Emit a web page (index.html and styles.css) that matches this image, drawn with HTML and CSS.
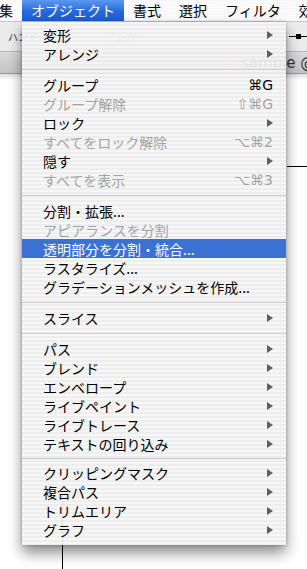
FILE: index.html
```html
<html>
  <head>
    <title>オブジェクト menu</title>
    <meta charset="utf-8">
    <link rel="stylesheet" href="styles.css">
  </head>
  <body>
    <div class="screen">
      <div class="menubar">
        <span class="title first">集</span>
        <span class="title open">オブジェクト</span>
        <span class="title">書式</span>
        <span class="title">選択</span>
        <span class="title">フィルタ</span>
        <span class="title">効果</span>
      </div>

      <div class="toolbar">
        <span class="tool-label">ハンドル</span>
        <span class="tool-label anchor">アンカー</span>
        <span class="slider"><span class="knob"></span></span>
      </div>

      <div class="tabbar">
        <span class="doc-icon"></span>
        <span class="doc-name">sample @ 100%</span>
      </div>

      <div class="canvas">
        <div class="guide-v"></div>
        <div class="guide-h"></div>
      </div>

      <div class="menu">
        <div class="item">変形<span class="arrow"></span></div>
        <div class="item">アレンジ<span class="arrow"></span></div>
        <div class="sep"></div>
        <div class="item">グループ<span class="key">⌘G</span></div>
        <div class="item off">グループ解除<span class="key">⇧⌘G</span></div>
        <div class="item">ロック<span class="arrow"></span></div>
        <div class="item off">すべてをロック解除<span class="key">⌥⌘2</span></div>
        <div class="item">隠す<span class="arrow"></span></div>
        <div class="item off">すべてを表示<span class="key">⌥⌘3</span></div>
        <div class="sep"></div>
        <div class="item">分割・拡張...</div>
        <div class="item off">アピアランスを分割</div>
        <div class="item hot">透明部分を分割・統合...</div>
        <div class="item">ラスタライズ...</div>
        <div class="item">グラデーションメッシュを作成...</div>
        <div class="sep"></div>
        <div class="item">スライス<span class="arrow"></span></div>
        <div class="sep"></div>
        <div class="item">パス<span class="arrow"></span></div>
        <div class="item">ブレンド<span class="arrow"></span></div>
        <div class="item">エンベロープ<span class="arrow"></span></div>
        <div class="item">ライブペイント<span class="arrow"></span></div>
        <div class="item">ライブトレース<span class="arrow"></span></div>
        <div class="item">テキストの回り込み<span class="arrow"></span></div>
        <div class="sep short"></div>
        <div class="item">クリッピングマスク<span class="arrow"></span></div>
        <div class="item">複合パス<span class="arrow"></span></div>
        <div class="item">トリムエリア<span class="arrow"></span></div>
        <div class="item">グラフ<span class="arrow"></span></div>
      </div>
    </div>
  </body>
</html>
```

FILE: styles.css
```css
body {
  margin: 0;
  font-family: "Noto Sans CJK JP", "DejaVu Sans", sans-serif;
}

.screen {
  position: relative;
  width: 307px;
  height: 569px;
  overflow: hidden;
  background: #fff;
  display: flex;
  flex-direction: column;
}

/* top menu bar */
.menubar {
  height: 22px;
  display: flex;
  white-space: nowrap;
  background: repeating-linear-gradient(#f7f7f7 0 1px, #fdfdfd 1px 2px);
  border-bottom: 1px solid #c8c8c8;
  box-sizing: border-box;
}

.title {
  padding: 0 9px;
  font-size: 14px;
  line-height: 21px;
  color: #000;
}

.title.first {
  margin-left: -10px;
}

.title.open {
  color: #fff;
  background: linear-gradient(#5d98f0, #2468dc 55%, #1b5ed4);
}

/* tool options bar */
.toolbar {
  height: 30px;
  display: flex;
  align-items: center;
  background: #ececec;
  border-bottom: 1px solid #b8b8b8;
  box-sizing: border-box;
}

.tool-label {
  font-size: 10px;
  color: #333;
  margin-left: 8px;
}

.tool-label.anchor {
  margin-left: 58px;
  color: #888;
}

.slider {
  margin-left: auto;
  width: 18px;
  height: 1px;
  background: #000;
  display: flex;
  align-items: center;
  justify-content: center;
}

.knob {
  width: 5px;
  height: 5px;
  background: #000;
}

/* document tab */
.tabbar {
  height: 22px;
  display: flex;
  align-items: center;
  justify-content: flex-end;
  white-space: nowrap;
  background: linear-gradient(#dadada, #c4c4c4);
  border-bottom: 1px solid #9a9a9a;
  box-sizing: border-box;
}

.doc-icon {
  width: 10px;
  height: 12px;
  background: #f2b36a;
  margin-right: 6px;
  flex-shrink: 0;
}

.doc-name {
  font-family: "DejaVu Sans", sans-serif;
  font-size: 15px;
  color: #333;
  margin-right: -56px;
}

.canvas {
  position: relative;
  flex: 1;
  background: linear-gradient(#dcdcdc, #fff 6px);
}

.guide-v {
  position: absolute;
  left: 62px;
  top: 420px;
  bottom: 0;
  width: 1px;
  background: #000;
}

.guide-h {
  position: absolute;
  left: 287px;
  right: 0;
  top: 92px;
  height: 1px;
  background: #000;
}

/* dropdown */
.menu {
  position: absolute;
  top: 22px;
  left: 22px;
  width: 264px;
  padding: 3px 0 6px;
  box-sizing: border-box;
  background: repeating-linear-gradient(rgba(246, 246, 246, 0.93) 0 2px, rgba(236, 236, 236, 0.93) 2px 4px);
  box-shadow: 0 8px 13px rgba(0, 0, 0, 0.45), 0 0 3px rgba(0, 0, 0, 0.25);
}

.item {
  height: 19px;
  display: flex;
  align-items: center;
  padding: 0 12px 0 21px;
  font-size: 14px;
  color: #000;
  white-space: nowrap;
}

.item.off {
  color: #a3a3a3;
}

.item.hot {
  color: #fff;
  background: #3a71d3;
}

.key {
  margin-left: auto;
  margin-right: 1px;
  font-family: "DejaVu Sans", sans-serif;
  font-size: 14px;
}

.arrow {
  margin-left: auto;
  margin-right: 1px;
  width: 0;
  height: 0;
  border-top: 4.5px solid transparent;
  border-bottom: 4.5px solid transparent;
  border-left: 6px solid #5e5e5e;
}

.sep {
  height: 12px;
  display: flex;
  align-items: center;
}

.sep.short {
  height: 10px;
}

.sep::before {
  content: "";
  flex: 1;
  height: 1px;
  background: #cdcdcd;
}
```
